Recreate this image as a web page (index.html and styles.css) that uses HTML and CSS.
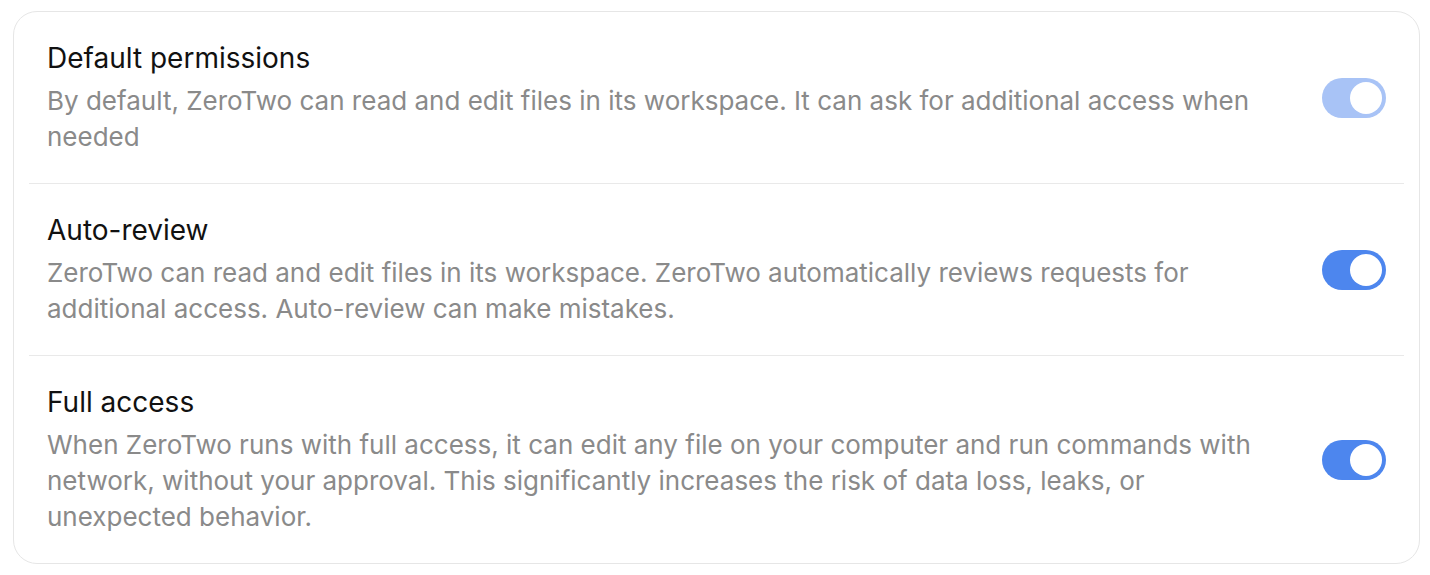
FILE: index.html
```html
<!DOCTYPE html>
<html lang="en">
<head>
  <meta charset="UTF-8">
  <meta name="viewport" content="width=device-width, initial-scale=1.0">
  <title>Permissions</title>
  <link rel="stylesheet" href="styles.css">
</head>
<body>
  <!-- Permissions Card -->
  <div class="card">
    <div class="row">
      <div class="row-text">
        <h3 class="row-title">Default permissions</h3>
        <p class="row-desc">By default, ZeroTwo can read and edit files in its workspace. It can ask for additional access when needed</p>
      </div>
      <span class="toggle on disabled"><span class="knob"></span></span>
    </div>

    <div class="row">
      <div class="row-text">
        <h3 class="row-title">Auto-review</h3>
        <p class="row-desc">ZeroTwo can read and edit files in its workspace. ZeroTwo automatically reviews requests for additional access. Auto-review can make mistakes.</p>
      </div>
      <span class="toggle on"><span class="knob"></span></span>
    </div>

    <div class="row">
      <div class="row-text">
        <h3 class="row-title">Full access</h3>
        <p class="row-desc">When ZeroTwo runs with full access, it can edit any file on your computer and run commands with network, without your approval. This significantly increases the risk of data loss, leaks, or unexpected behavior.</p>
      </div>
      <span class="toggle on"><span class="knob"></span></span>
    </div>
  </div>
</body>
</html>
```

FILE: styles.css
```css
/* General Reset and Layout */
body {
  margin: 0;
  font-family: Inter, "Noto Sans", sans-serif;
  background-color: #ffffff;
  color: #111111;
  padding: 11px 10px 0 13px;
}

.card {
  border: 1.5px solid #e6e6e6;
  border-radius: 24px;
  padding: 0 15px 0 15px;
  background-color: #ffffff;
}

.row {
  display: flex;
  align-items: center;
  justify-content: space-between;
  padding: 28px 18px 28px 18px;
  border-bottom: 1px solid #e9e9e9;
}

.row:last-child {
  border-bottom: none;
}

.row-text {
  max-width: 1225px;
}

.row-title {
  margin: 0 0 7px 0;
  font-size: 28px;
  font-weight: 400;
  line-height: 36px;
  color: #111111;
}

.row-desc {
  margin: 0;
  font-size: 26px;
  line-height: 36px;
  color: #8a8a8a;
}

/* Toggle switch */
.toggle {
  flex-shrink: 0;
  width: 64px;
  height: 40px;
  border-radius: 20px;
  background-color: #d6d6d6;
  box-sizing: border-box;
  padding: 4px;
  display: flex;
  justify-content: flex-start;
}

.toggle.on {
  background-color: #4d86ee;
  justify-content: flex-end;
}

.toggle.on.disabled {
  background-color: #a8c3f6;
}

.toggle .knob {
  width: 32px;
  height: 32px;
  border-radius: 50%;
  background-color: #ffffff;
}
```
